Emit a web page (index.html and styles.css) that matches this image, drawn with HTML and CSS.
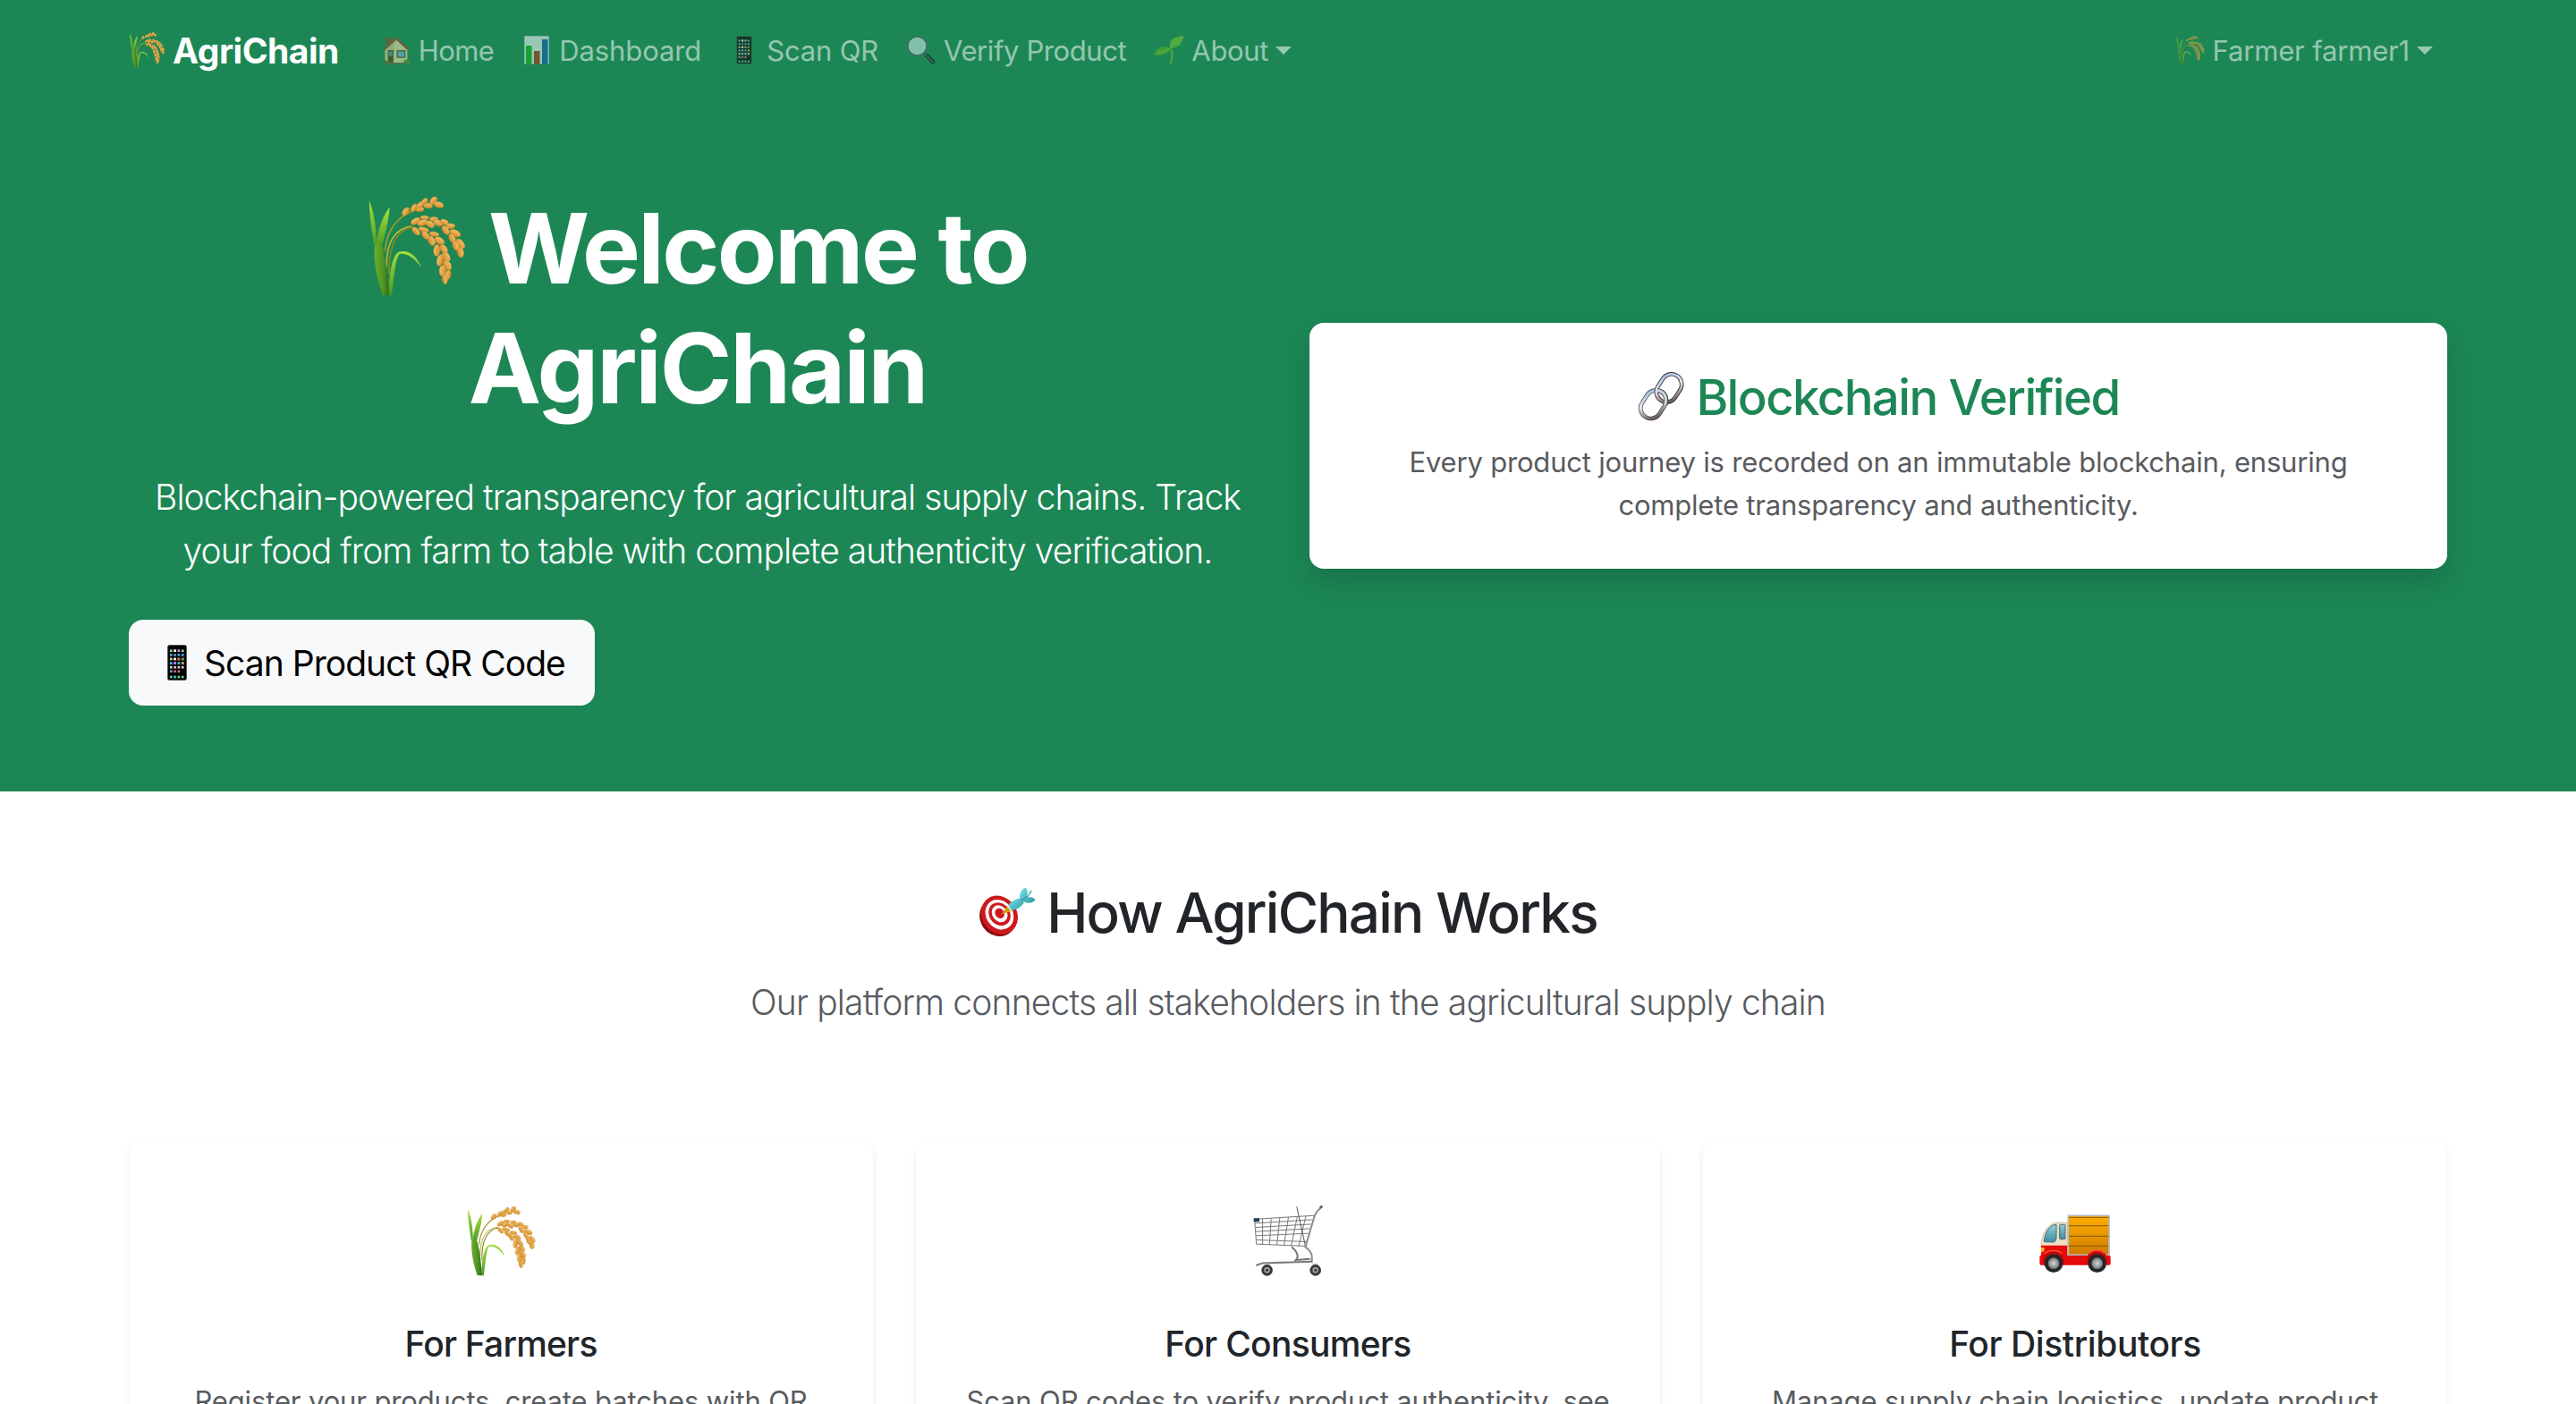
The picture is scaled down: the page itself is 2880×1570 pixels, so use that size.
FILE: index.html
```html
<!DOCTYPE html>
<html lang="en">
<head>
<meta charset="utf-8">
<title>AgriChain</title>
<link rel="stylesheet" href="styles.css">
</head>
<body>
<svg class="sprite" aria-hidden="true">
  <defs>
    <linearGradient id="stem" x1="0" x2="1"><stop offset="0" stop-color="#6fae2c"/><stop offset=".6" stop-color="#4f9424"/><stop offset="1" stop-color="#2f6d17"/></linearGradient>
    <linearGradient id="blade" x1="0" y1="0" x2="0" y2="1"><stop offset="0" stop-color="#a4e03e"/><stop offset="1" stop-color="#4a9a25"/></linearGradient>
    <linearGradient id="grain" x1="0" y1="0" x2="0" y2="1"><stop offset="0" stop-color="#f3c169"/><stop offset="1" stop-color="#d48b2a"/></linearGradient>
    <linearGradient id="glass" x1="0" y1="0" x2="0" y2="1"><stop offset="0" stop-color="#8fd0dc"/><stop offset="1" stop-color="#3c8ba3"/></linearGradient>
    <linearGradient id="cargo" x1="0" y1="0" x2="0" y2="1"><stop offset="0" stop-color="#ffb000"/><stop offset="1" stop-color="#cf7a00"/></linearGradient>
    <linearGradient id="metal" x1="0" y1="0" x2="1" y2="1"><stop offset="0" stop-color="#8fb4dc"/><stop offset=".45" stop-color="#e8ecf2"/><stop offset="1" stop-color="#4b3c3e"/></linearGradient>
    <radialGradient id="hub"><stop offset="0" stop-color="#d5d7da"/><stop offset="1" stop-color="#55585c"/></radialGradient>
    <linearGradient id="dart" x1="0" y1="0" x2="1" y2="1"><stop offset="0" stop-color="#7ae0e6"/><stop offset="1" stop-color="#2a98a5"/></linearGradient>
  </defs>
  <symbol id="i-rice" viewBox="36 33 326 332">
    <g fill="none" stroke="#8a8a22" stroke-width="5">
      <path d="M93 215C98 150 125 118 158 94L190 78" stroke="#a39a2c"/>
      <path d="M97 270C98 190 120 140 182 132" stroke="#b5b93c"/>
      <path d="M107 290C104 200 128 145 186 134"/>
    </g>
    <path d="M40 46C52 75 63 120 64 186L57 200C48 150 40 95 40 46Z" fill="url(#blade)"/>
    <path d="M108 67C107 110 92 160 80 205L62 195C70 140 84 100 108 67Z" fill="url(#blade)"/>
    <path d="M103 362C108 300 112 235 138 218C168 208 200 228 214 271C190 235 165 222 142 224C126 240 124 300 115 362Z" fill="url(#blade)"/>
    <path d="M57 215C56 180 78 180 86 205C94 240 104 290 106 362H85C70 320 57 270 57 215Z" fill="url(#stem)"/>
    <g fill="url(#grain)" stroke="#bd7a2a" stroke-width="1">
      <ellipse cx="208" cy="75" rx="15" ry="8"/><ellipse cx="162" cy="83" rx="16" ry="10" transform="rotate(-55 162 83)"/><ellipse cx="190" cy="70" rx="15" ry="9" transform="rotate(-55 190 70)"/><ellipse cx="212" cy="60" rx="14" ry="9" transform="rotate(-45 212 60)"/><ellipse cx="226" cy="48" rx="12" ry="8" transform="rotate(-40 226 48)"/><ellipse cx="237" cy="63" rx="15" ry="9"/><ellipse cx="255" cy="46" rx="15" ry="10" transform="rotate(-50 255 46)"/><ellipse cx="272" cy="60" rx="17" ry="10" transform="rotate(15 272 60)"/>
      <ellipse cx="225" cy="103" rx="14" ry="7"/><ellipse cx="195" cy="115" rx="17" ry="10" transform="rotate(-30 195 115)"/><ellipse cx="218" cy="120" rx="17" ry="10" transform="rotate(-20 218 120)"/><ellipse cx="256" cy="108" rx="14" ry="8"/><ellipse cx="243" cy="125" rx="16" ry="10" transform="rotate(30 243 125)"/><ellipse cx="270" cy="121" rx="16" ry="10" transform="rotate(20 270 121)"/><ellipse cx="291" cy="118" rx="14" ry="9" transform="rotate(20 291 118)"/><ellipse cx="312" cy="131" rx="15" ry="9"/><ellipse cx="295" cy="145" rx="17" ry="10" transform="rotate(55 295 145)"/><ellipse cx="327" cy="155" rx="20" ry="11" transform="rotate(25 327 155)"/><ellipse cx="317" cy="172" rx="16" ry="10" transform="rotate(60 317 172)"/><ellipse cx="345" cy="190" rx="19" ry="11" transform="rotate(50 345 190)"/><ellipse cx="329" cy="197" rx="17" ry="10" transform="rotate(70 329 197)"/><ellipse cx="345" cy="219" rx="17" ry="11" transform="rotate(80 345 219)"/>
      <ellipse cx="196" cy="148" rx="17" ry="9" transform="rotate(45 196 148)"/><ellipse cx="222" cy="143" rx="18" ry="8" transform="rotate(15 222 143)"/><ellipse cx="228" cy="162" rx="16" ry="10" transform="rotate(50 228 162)"/><ellipse cx="257" cy="158" rx="17" ry="8" transform="rotate(10 257 158)"/><ellipse cx="248" cy="180" rx="17" ry="11" transform="rotate(65 248 180)"/><ellipse cx="275" cy="180" rx="18" ry="11" transform="rotate(30 275 180)"/><ellipse cx="289" cy="208" rx="17" ry="11" transform="rotate(55 289 208)"/><ellipse cx="266" cy="212" rx="20" ry="11" transform="rotate(-85 266 212)"/><ellipse cx="297" cy="234" rx="18" ry="12" transform="rotate(60 297 234)"/><ellipse cx="277" cy="245" rx="20" ry="11" transform="rotate(-75 277 245)"/><ellipse cx="301" cy="262" rx="18" ry="12" transform="rotate(55 301 262)"/><ellipse cx="286" cy="280" rx="19" ry="12" transform="rotate(-85 286 280)"/><ellipse cx="304" cy="294" rx="17" ry="9" transform="rotate(-80 304 294)"/><ellipse cx="292" cy="309" rx="17" ry="9" transform="rotate(80 292 309)"/>
    </g>
  </symbol>
  <symbol id="i-home" viewBox="0 0 30 31">
    <path d="M4 2H10V10H4Z" fill="#8a4a36"/>
    <path d="M3 14L15 3L27 14V30H3Z" fill="#f0dfab"/>
    <path d="M3 14V30H13V5Z" fill="#dccb95"/>
    <path d="M1 14L15 1L29 14L27 15.500L15 4.500L3 15.500Z" fill="#9c4a35"/>
    <path d="M6 15.500H12V29H6Z" fill="#5e4022"/><path d="M7 17h4v5H7Z" fill="#5e91b3"/>
    <path d="M15.500 15.500H25V24H15.500Z" fill="#6a4d30"/><path d="M16.800 16.800H23.700V22.700H16.800Z" fill="#6bb7dd"/>
    <ellipse cx="2.800" cy="28.500" rx="2.800" ry="2.200" fill="#4c7c22"/><ellipse cx="26.500" cy="28" rx="3.400" ry="2.600" fill="#5b9626"/>
    <path d="M2 29H28V31H2Z" fill="#6a6a4a"/>
  </symbol>
  <symbol id="i-chart" viewBox="0 0 28 32">
    <path d="M0 0H28V32H0Z" fill="#eef1f4"/><path d="M0 0H28V32H0ZM1 1V31H27V1Z" fill="#b9c4cc" fill-rule="evenodd"/>
    <path d="M2 11H8.500V32H2Z" fill="#10b520"/><path d="M11 17H17.500V32H11Z" fill="#a9381d"/><path d="M20 4H26.500V32H20Z" fill="#0a62b4"/>
  </symbol>
  <symbol id="i-phone" viewBox="0 0 22 40">
    <rect x=".5" y=".5" width="21" height="39" rx="2" fill="#050505" stroke="#55585c"/>
    <g fill="none" stroke-width="2.600" stroke-dasharray="2.600 1.700">
      <path d="M3 6.800H20" stroke="#8be29a"/><path d="M3 11.400H20" stroke="#45a8e8"/><path d="M3 16H20" stroke="#ece27c"/><path d="M3 20.600H20" stroke="#32c8f4"/><path d="M3 25.200H20" stroke="#d8d8d8"/><path d="M3 29.800H15" stroke="#e86a70"/><path d="M3 36H20" stroke="#5be07e"/>
    </g>
    <path d="M7.300 5.500h2.600v2.600H7.300ZM7.300 14.700h2.600v2.600H7.300Z" fill="#fff"/><path d="M7.300 19.300h2.600v2.600H7.300ZM11.600 5.500h2.600v2.600h-2.600Z" fill="#d96bea"/><path d="M11.600 14.700h2.600v2.600h-2.600Z" fill="#f2584b"/><path d="M15.900 19.300h2.600v2.600h-2.600Z" fill="#ff9b1a"/><path d="M15.900 14.700h2.600v2.600h-2.600ZM7.300 10.100h2.600v2.600H7.300Z" fill="#777"/><path d="M3 28.500h2.600v2.600H3ZM7.300 34.700h2.600v2.600H7.300Z" fill="#35a9ed"/>
  </symbol>
  <symbol id="i-search" viewBox="0 0 32 32">
    <path d="M19 22L23 19.500L31.500 28C31.500 31 30 32 27.500 31.500Z" fill="#20262a"/><path d="M21 21L29 30" stroke="#79858b"/>
    <circle cx="11.500" cy="11.500" r="10.500" fill="#c5e4e6" stroke="#56676b" stroke-width="1.800"/><circle cx="11.500" cy="11.500" r="9" fill="none" stroke="#e1f3f2" stroke-width="1"/>
  </symbol>
  <symbol id="i-sprout" viewBox="0 0 32 30">
    <path d="M17.500 29C20 22 19.500 16 17 12" fill="none" stroke="#6dbb2b" stroke-width="2.200"/>
    <path d="M17 13C15 4 21 1 31.500 0C30 8 26 13 17 13Z" fill="#6fbf2f"/><path d="M17.500 14C12 9 3 12 0 20C8 21 14 20 17.500 14Z" fill="#5cad2a"/><path d="M17 12L29 2M16 14L3 19" stroke="#9bdd4d" stroke-width=".7"/>
  </symbol>
  <symbol id="i-link" viewBox="0 0 54 56">
    <g fill="none">
      <g transform="rotate(33 18 37)"><rect x="7" y="20.500" width="23" height="33" rx="11.500" stroke="#3e3538" stroke-width="4.600"/><rect x="7" y="20.500" width="23" height="33" rx="11.500" stroke="url(#metal)" stroke-width="3.200"/></g>
      <g transform="rotate(33 36 19)"><rect x="24.500" y="2.500" width="23" height="33" rx="11.500" stroke="#3e3034" stroke-width="4.600"/><rect x="24.500" y="2.500" width="23" height="33" rx="11.500" stroke="url(#metal)" stroke-width="2.800"/></g>
      <path d="M23 21.500C31 22 35 29 32 38" stroke="#4b4245" stroke-width="4.600"/><path d="M22.500 21.500C30.500 22 34.500 29 31.500 38" stroke="#ccd5df" stroke-width="3"/>
    </g>
  </symbol>
  <symbol id="i-target" viewBox="25 32 192 166">
    <ellipse cx="90" cy="134" rx="60" ry="66" transform="rotate(-35 90 134)" fill="#8c0f14"/>
    <g transform="rotate(-35 95 126)">
      <ellipse cx="95" cy="126" rx="59" ry="68" fill="#cf171d"/><ellipse cx="96" cy="125" rx="45" ry="53" fill="#fff"/><ellipse cx="97" cy="124" rx="35" ry="41" fill="#cf171d"/><ellipse cx="98" cy="123" rx="25" ry="30" fill="#fff"/><ellipse cx="99" cy="122" rx="15" ry="18" fill="#cf171d"/>
    </g>
    <path d="M100 125L121 98L135 113Z" fill="#e0a812"/><path d="M102 123L128 104" stroke="#8e650b" stroke-width="2"/>
    <path d="M125 94C132 80 150 72 167 70L178 83C170 98 150 110 137 111Z" fill="url(#dart)"/>
    <path d="M165 75C160 55 170 36 184 34C192 45 190 58 186 66L202 41L205 47L190 67C202 64 212 67 216 75C207 88 189 87 176 81Z" fill="url(#dart)"/><path d="M167 78L190 62" stroke="#1f8591" stroke-width="3"/>
  </symbol>
  <symbol id="i-cart" viewBox="93 78 236 238">
    <g fill="none" stroke="#77777a" stroke-width="3">
      <path d="M97 124L297 112M98 138L290 126M99 152L286 141M100 166L282 156M101 180L278 172M102 194L274 200M103 208L270 215"/>
      <path d="M97 124L103 208M124 123V211M153 121L147 211M182 119L172 212M211 117L196 214M241 115L220 215M270 113L245 216"/>
      <path d="M239 82L268 214" stroke="#555"/>
      <path d="M325 82C300 102 302 108 298 116L268 218C282 228 290 236 290 250V270" stroke="#8b8b8e" stroke-width="6"/>
      <path d="M222 218C244 236 246 252 236 262L284 258M102 280L124 272L290 267" stroke="#77777a" stroke-width="6"/>
    </g>
    <path d="M317 86L325 80" stroke="#555" stroke-width="7"/><path d="M94 121H113V133H94Z" fill="#173f5c"/>
    <path d="M127 275H150L146 298H134ZM290 272H312L308 297H296Z" fill="#ddd6d6"/>
    <g fill="#a7a2a0" stroke="#3b3838" stroke-width="9"><circle cx="139" cy="296" r="14.500"/><circle cx="302" cy="296" r="14.500"/></g><circle cx="139" cy="296" r="5" fill="#3b3838"/><circle cx="302" cy="296" r="5" fill="#3b3838"/>
  </symbol>
  <symbol id="i-truck" viewBox="120 114 240 198">
    <path d="M126 218C128 180 145 150 172 142H216V222H126Z" fill="#eadfc4" stroke="#b9ad91" stroke-width="2"/>
    <path d="M136 206C138 178 150 156 168 149H177V192C177 202 172 207 164 207Z" fill="url(#glass)" stroke="#56686b" stroke-width="3"/>
    <rect x="188" y="148" width="19" height="49" rx="3" fill="url(#glass)" stroke="#56686b" stroke-width="3"/>
    <rect x="217" y="118" width="137" height="132" fill="url(#cargo)" stroke="#b3bcc2" stroke-width="5"/>
    <path d="M219 124H352M219 152H352M219 187H352M219 220H352" stroke="#875400" stroke-width="3"/>
    <path d="M126 218H214V252H284C294 230 336 228 344 252H356Q359 253 359 260V278Q359 284 353 284H126Q121 284 121 278V256L126 250Z" fill="#e40b0b"/>
    <path d="M134 252C145 230 192 230 202 256V284H134ZM280 254C294 232 334 232 346 254L340 284H284Z" fill="#c20808"/><path d="M137 246C150 232 185 232 196 246M290 243C302 232 326 232 338 244" fill="none" stroke="#ff4a36" stroke-width="5"/>
    <path d="M126 225H136Q140 235 131 241H126Z" fill="#ffae18"/>
    <g fill="url(#hub)" stroke="#252627" stroke-width="12"><circle cx="168" cy="278" r="25"/><circle cx="314" cy="278" r="25"/></g>
  </symbol>
</svg>

<nav class="navbar">
  <div class="container navbar-row">
    <a class="brand"><svg class="brand-icon"><use href="#i-rice"/></svg><span class="label">AgriChain</span></a>
    <ul class="nav-list">
      <li class="nav-link"><svg class="nav-icon"><use href="#i-home"/></svg><span class="label nav-home">Home</span></li>
      <li class="nav-link"><svg class="nav-icon"><use href="#i-chart"/></svg><span class="label nav-dashboard">Dashboard</span></li>
      <li class="nav-link"><svg class="nav-icon"><use href="#i-phone"/></svg><span class="label nav-scan">Scan QR</span></li>
      <li class="nav-link"><svg class="nav-icon"><use href="#i-search"/></svg><span class="label nav-verify">Verify Product</span></li>
      <li class="nav-link dropdown"><svg class="nav-icon"><use href="#i-sprout"/></svg><span class="label nav-about">About</span></li>
    </ul>
    <a class="nav-link dropdown account"><svg class="nav-icon"><use href="#i-rice"/></svg><span class="label">Farmer farmer1</span></a>
  </div>
</nav>

<header class="hero">
  <div class="container hero-row">
    <div class="hero-copy">
      <h1 class="hero-title"><span class="hero-line"><svg class="hero-icon"><use href="#i-rice"/></svg><span class="label">Welcome to</span></span><span class="hero-line hero-name"><span class="label">AgriChain</span></span></h1>
      <p class="lead hero-lead">Blockchain-powered transparency for agricultural supply chains. Track<br>your food from farm to table with complete authenticity verification.</p>
      <a class="scan-button"><svg class="scan-icon"><use href="#i-phone"/></svg><span class="label">Scan Product QR Code</span></a>
    </div>
    <div class="verified-card">
      <h3 class="verified-title"><svg class="link-icon"><use href="#i-link"/></svg><span class="label">Blockchain Verified</span></h3>
      <p class="verified-text">Every product journey is recorded on an immutable blockchain, ensuring<br>complete transparency and authenticity.</p>
    </div>
  </div>
</header>

<main class="container">
  <h2 class="section-title"><svg class="target-icon"><use href="#i-target"/></svg><span class="label">How AgriChain Works</span></h2>
  <p class="lead section-lead">Our platform connects all stakeholders in the agricultural supply chain</p>
  <div class="roles">
    <article class="role-card"><div class="role-icon"><svg class="role-rice"><use href="#i-rice"/></svg></div><h5 class="role-title farmers">For Farmers</h5><p class="role-text">Register your products, create batches with QR</p></article>
    <article class="role-card"><div class="role-icon"><svg class="role-cart"><use href="#i-cart"/></svg></div><h5 class="role-title consumers">For Consumers</h5><p class="role-text">Scan QR codes to verify product authenticity, see</p></article>
    <article class="role-card"><div class="role-icon"><svg class="role-truck"><use href="#i-truck"/></svg></div><h5 class="role-title distributors">For Distributors</h5><p class="role-text">Manage supply chain logistics, update product</p></article>
  </div>
</main>
</body>
</html>
```
FILE: styles.css
```css
* { box-sizing: border-box; }
body { margin: 0; height: 1570px; overflow: hidden; background: #fff; color: #212529; font-family: Inter, sans-serif; font-size: 31px; line-height: 48px; }
h1, h2, h3, h5, p, ul { margin: 0; padding: 0; }
svg { display: block; flex: none; }
.sprite { position: absolute; width: 0; height: 0; }
.label { padding-top: 2px; white-space: nowrap; }
.container { width: 2640px; margin: 0 auto; padding: 0 24px; }

.navbar { height: 112px; background: #1c8755; }
.navbar-row { display: flex; align-items: center; height: 112px; }
.brand { display: flex; align-items: center; gap: 8px; margin-right: 44px; color: #fff; font-size: 39px; font-weight: 700; letter-spacing: -.49px; }
.brand-icon { width: 41px; height: 40px; }
.nav-list { display: flex; gap: 28px; list-style: none; }
.nav-link { display: flex; align-items: center; gap: 5px; color: rgba(255, 255, 255, .55); }
.nav-icon { width: 40px; height: 32px; opacity: .6; }
.nav-home { letter-spacing: -.59px; }
.nav-dashboard { letter-spacing: -.11px; }
.nav-scan { letter-spacing: -.17px; }
.nav-verify { letter-spacing: -.4px; }
.nav-about { letter-spacing: -.32px; }
.dropdown::after { content: ""; margin-left: 3px; border: 9px solid transparent; border-top-color: rgba(255, 255, 255, .55); border-bottom: 0; }
.account { margin-left: auto; margin-right: 16px; letter-spacing: -.17px; }

.hero { height: 773px; padding-top: 96px; background: #1c8755; }
.hero-row { display: flex; justify-content: space-between; }
.hero-copy { width: 1272px; color: #fff; }
.hero-title { font-size: 109px; font-weight: 700; line-height: 134.4px; letter-spacing: -2.58px; text-align: center; }
.hero-line { display: flex; justify-content: center; align-items: center; gap: 25px; height: 134.4px; }
.hero-icon { width: 110px; height: 111px; }
.hero-name { letter-spacing: -2.1px; }
.hero-line .label { padding-top: 3px; }
.lead { font-size: 39px; font-weight: 300; line-height: 60px; text-align: center; white-space: nowrap; }
.hero-lead { margin-top: 49px; letter-spacing: -.95px; }
.scan-button { display: flex; align-items: center; width: 521px; height: 96px; margin-top: 47px; padding-left: 43px; gap: 19px; border-radius: 16px; background: #f8f9fa; color: #000; font-size: 39px; letter-spacing: -.97px; }
.scan-icon { width: 22px; height: 40px; }
.verified-card { width: 1272px; height: 275px; margin-top: 153px; padding-top: 48px; border-radius: 16px; background: #fff; box-shadow: 0 16px 32px rgba(0, 0, 0, .15); text-align: center; }
.verified-title { display: flex; justify-content: center; align-items: center; gap: 12px; height: 67px; color: #1c8755; font-size: 54.5px; font-weight: 500; letter-spacing: -1.56px; }
.link-icon { width: 54px; height: 56px; }
.verified-text { margin-top: 17px; color: #585b5f; letter-spacing: -.19px; }

.section-title { display: flex; justify-content: center; align-items: center; gap: 12px; margin-top: 96px; height: 77px; font-size: 62px; font-weight: 500; letter-spacing: -1.8px; }
.target-icon { width: 64px; height: 55px; }
.section-lead { margin-top: 33px; color: #585b5f; letter-spacing: -.85px; }
.roles { display: grid; grid-template-columns: repeat(3, 1fr); gap: 48px; margin-top: 126px; }
.role-card { height: 294px; padding-top: 48px; border-radius: 12px 12px 0 0; background: #fff; box-shadow: 0 4px 8px rgba(0, 0, 0, .075); text-align: center; }
.role-icon { display: flex; justify-content: center; align-items: center; height: 125px; }
.role-rice { width: 77px; height: 78px; }
.role-cart { width: 79px; height: 79px; }
.role-truck { width: 80px; height: 66px; margin-top: 7px; }
.role-title { margin-top: 29px; font-size: 39px; font-weight: 500; line-height: 48px; }
.farmers { letter-spacing: -.81px; }
.consumers { letter-spacing: -.69px; }
.distributors { letter-spacing: -.42px; }
.role-text { margin-top: 16px; color: #585b5f; letter-spacing: -.13px; }
```
